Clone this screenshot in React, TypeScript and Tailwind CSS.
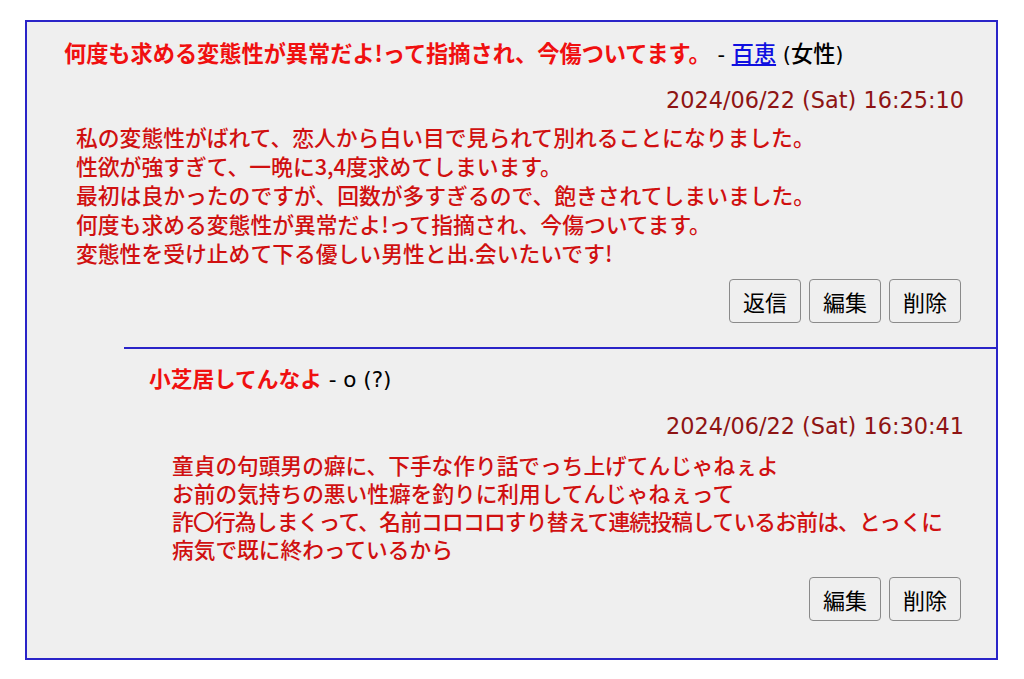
import React from "react";

const font = { fontFamily: '"DejaVu Sans", "Noto Sans CJK JP", sans-serif' };
const cjk = { fontFamily: '"Noto Sans CJK JP", "DejaVu Sans", sans-serif' };

function Btn({ children }: { children: React.ReactNode }) {
  return (
    <button className="h-[44px] w-[72px] rounded-[4px] border border-[#8a8a8a] bg-[#efefef] text-[22px] leading-none text-black" style={cjk}>
      {children}
    </button>
  );
}

export default function App() {
  return (
    <div className="min-h-[679px] bg-white pt-[20px]" style={font}>
      <div className="mx-[25px] w-[973px] border-2 border-[#2a24c8] bg-[#efefef]">
        <div className="pl-[37px] pr-[32px] pt-[15px]">
          <div className="whitespace-nowrap text-[22.2px] leading-[30px]">
            <span className="text-[#f01010] font-bold" style={cjk}>何度も求める変態性が異常だよ!って指摘され、今傷ついてます。</span>
            <span className="text-black text-[21px]"> - </span>
            <a className="text-[#1010e0] underline font-medium" style={cjk}>百恵</a>
            <span className="text-black text-[21px]"> (</span>
            <span className="text-black font-medium" style={cjk}>女性</span>
            <span className="text-black text-[21px]">)</span>
          </div>
          <div className="mt-[15px] text-right text-[22.4px] leading-[30px] text-[#8e1414]">2024/06/22 (Sat) 16:25:10</div>
          <div className="mt-[7px] whitespace-nowrap pl-[12px] text-[21.8px] leading-[29px] font-medium text-[#d01010]" style={cjk}>
            <div>私の変態性がばれて、恋人から白い目で見られて別れることになりました。</div>
            <div>性欲が強すぎて、一晩に3,4度求めてしまいます。</div>
            <div>最初は良かったのですが、回数が多すぎるので、飽きされてしまいました。</div>
            <div>何度も求める変態性が異常だよ!って指摘され、今傷ついてます。</div>
            <div>変態性を受け止めて下る優しい男性と出.会いたいです!</div>
          </div>
          <div className="mt-[12px] mr-[3px] flex justify-end gap-[8px] pb-[24px]">
            <Btn>返信</Btn>
            <Btn>編集</Btn>
            <Btn>削除</Btn>
          </div>
        </div>
        <div className="ml-[97px] border-t-2 border-[#2a24c8] pl-[25px] pr-[32px] pt-[14px]">
          <div className="text-[21.5px] leading-[30px]">
            <span className="text-[#f01010] font-bold text-[21.7px]" style={cjk}>小芝居してんなよ</span>
            <span className="text-black"> - o (?)</span>
          </div>
          <div className="mt-[16px] text-right text-[22.4px] leading-[30px] text-[#8e1414]">2024/06/22 (Sat) 16:30:41</div>
          <div className="mt-[10px] whitespace-nowrap pl-[23px] text-[21.7px] leading-[28px] font-medium text-[#d01010]" style={cjk}>
            <div>童貞の句頭男の癖に、下手な作り話でっち上げてんじゃねぇよ</div>
            <div>お前の気持ちの悪い性癖を釣りに利用してんじゃねぇって</div>
            <div className="tracking-[-0.75px]">詐〇行為しまくって、名前コロコロすり替えて連続投稿しているお前は、とっくに</div>
            <div>病気で既に終わっているから</div>
          </div>
          <div className="mt-[14px] mr-[3px] flex justify-end gap-[8px] pb-[37px]">
            <Btn>編集</Btn>
            <Btn>削除</Btn>
          </div>
        </div>
      </div>
    </div>
  );
}
